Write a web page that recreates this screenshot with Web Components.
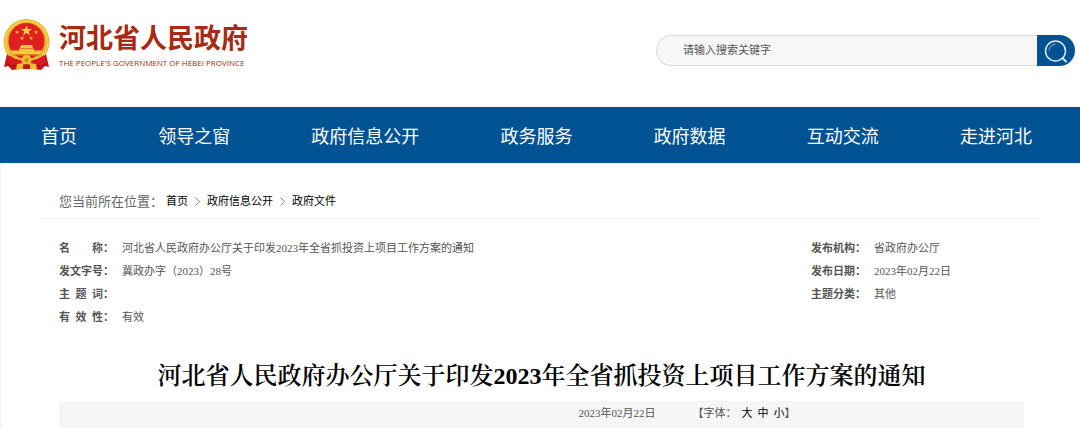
<!DOCTYPE html>
<html lang="zh-CN">
<head>
<meta charset="utf-8">
<title>河北省人民政府</title>
<style>
    body{
        margin: 0;
        background-color: #fff;
        color: #555;
        font-family: "Liberation Sans", "Noto Sans CJK SC", sans-serif;
        font-size: 11px;
    }
</style>
</head>
<body>
    <gov-header>
        <gov-logo></gov-logo>
        <gov-search></gov-search>
    </gov-header>

    <gov-nav>
        <nav-link>首页</nav-link>
        <nav-link>领导之窗</nav-link>
        <nav-link>政府信息公开</nav-link>
        <nav-link>政务服务</nav-link>
        <nav-link>政府数据</nav-link>
        <nav-link>互动交流</nav-link>
        <nav-link>走进河北</nav-link>
    </gov-nav>

    <gov-page>
        <bread-crumb slot="crumb">
            <crumb-item>首页</crumb-item>
            <crumb-item>政府信息公开</crumb-item>
            <crumb-item>政府文件</crumb-item>
        </bread-crumb>
        <doc-meta>
            <meta-row slot="left" label="名 称">河北省人民政府办公厅关于印发2023年全省抓投资上项目工作方案的通知</meta-row>
            <meta-row slot="left" label="发文字号">冀政办字（2023）28号</meta-row>
            <meta-row slot="left" label="主 题 词"></meta-row>
            <meta-row slot="left" label="有 效 性">有效</meta-row>
            <meta-row slot="right" label="发布机构">省政府办公厅</meta-row>
            <meta-row slot="right" label="发布日期">2023年02月22日</meta-row>
            <meta-row slot="right" label="主题分类">其他</meta-row>
        </doc-meta>
        <doc-title>河北省人民政府办公厅关于印发2023年全省抓投资上项目工作方案的通知</doc-title>
        <doc-tools>2023年02月22日</doc-tools>
    </gov-page>

<script>
// small helper, every element clones its own template
function makeTemplate(html){
    const t = document.createElement("template");
    t.innerHTML = html;
    return t;
}

class BaseElement extends HTMLElement{
    constructor(){
        super();
        this.attachShadow({mode:"open"});
        this.shadowRoot.appendChild(this.constructor.template.content.cloneNode(true));
    }
}

// top strip: logo on the left, search on the right
class GovHeader extends BaseElement{
    static template = makeTemplate(`
<style>
    :host{
        display: flex;
        justify-content: space-between;
        align-items: flex-start;
        gap: 24px;
        box-sizing: border-box;
        min-height: 107px;
        padding: 18px 5px 0 3px;
    }
</style>
<slot></slot>
`);
}
customElements.define("gov-header", GovHeader);

class GovLogo extends BaseElement{
    static template = makeTemplate(`
<style>
    :host{
        display: block;
    }
    a{
        display: flex;
        align-items: center;
        gap: 9px;
        color: #a62b12;
        text-decoration: none;
    }
    svg{
        width: 47px;
        height: 53px;
        flex: none;
    }
    .names{
        display: flex;
        flex-direction: column;
        padding-top: 5px;
        white-space: nowrap;
    }
    .cn{
        font-size: 27px;
        line-height: 32px;
        font-weight: 700;
    }
    .en{
        font-family: "Open Sans", sans-serif;
        font-size: 8px;
        line-height: 16px;
        font-weight: 500;
    }
</style>
<a href="#">
    <svg viewBox="0 0 47 53" aria-hidden="true">
        <path d="M4 36h39l3 13-4-1-4 4-7-1-5-3h-5l-5 3-7 1-4-4-4 1z" fill="#c5161d"/>
        <path d="M8 39l-3 9M39 39l3 9M12 44l-2 6M35 44l2 6" stroke="#8f0f12" stroke-width="1"/>
        <circle cx="23.500" cy="24" r="23" fill="#e9b42c"/>
        <circle cx="23.500" cy="24" r="21" fill="none" stroke="#f3cc4c" stroke-width="2"/>
        <circle cx="23.500" cy="23" r="18" fill="#e01f21"/>
        <path d="M23.500 7l1.400 4h4.200l-3.400 2.500 1.300 4.100-3.500-2.500-3.500 2.500 1.300-4.100-3.400-2.500h4.200z" fill="#f9cf45"/>
        <g fill="#f5bd38">
            <path d="M14 12l.6 1.500h1.600l-1.300 1 .5 1.600-1.400-1-1.400 1 .5-1.600-1.300-1h1.600z"/>
            <path d="M33 12l.6 1.500h1.600l-1.300 1 .5 1.600-1.400-1-1.400 1 .5-1.600-1.300-1h1.600z"/>
            <path d="M19 18l.6 1.500h1.600l-1.300 1 .5 1.600-1.400-1-1.400 1 .5-1.600-1.300-1h1.600z"/>
            <path d="M28 18l.6 1.500h1.600l-1.300 1 .5 1.600-1.400-1-1.400 1 .5-1.600-1.300-1h1.600z"/>
        </g>
        <path d="M18 27h11l1 3h-13zM16 30.500h15v2h8l-2 4h-27l-2-4h8z" fill="#f6c841"/>
        <path d="M9 37h29" stroke="#d98f1c" stroke-width="1"/>
        <path d="M6 37q9 7 17.500 4q8.500 3 17.500-4l2 8q-9 4-15 1h-9q-6 3-15-1z" fill="#d8191f"/>
        <path d="M11 39l9 3M36 39l-9 3" stroke="#efbb34" stroke-width="2"/>
        <circle cx="23.500" cy="42" r="5" fill="#efbd35"/>
        <circle cx="23.500" cy="42" r="2" fill="#cf8a1a"/>
        <path d="M14 46l6-1v6l-7 1zM27 45l6 1 1 6-7-1z" fill="#efbb34"/>
        <path d="M20 47l3.500-1 3.500 1v4h-7z" fill="#c5161d"/>
    </svg>
    <span class="names">
        <span class="cn">河北省人民政府</span>
        <span class="en">THE PEOPLE'S GOVERNMENT OF HEBEI PROVINCE</span>
    </span>
</a>
`);
}
customElements.define("gov-logo", GovLogo);

class GovSearch extends BaseElement{
    static template = makeTemplate(`
<style>
    :host{
        display: block;
        flex: 0 1 419px;
        margin-top: 17px;
    }
    form{
        display: flex;
        height: 31px;
        margin: 0;
    }
    input{
        flex: 1;
        min-width: 0;
        box-sizing: border-box;
        border: 1px solid #dcdcdc;
        border-right: none;
        border-radius: 16px 0 0 16px;
        background-color: #f7f7f7;
        padding: 0 26px 2px;
        color: #555;
        font: inherit;
        outline: none;
    }
    input::placeholder{
        color: #555;
        opacity: 1;
    }
    button{
        display: flex;
        justify-content: center;
        align-items: center;
        width: 38px;
        padding: 0;
        border: none;
        border-radius: 0 16px 16px 0;
        background-color: #015293;
        cursor: pointer;
    }
</style>
<form>
    <input type="text" aria-label="搜索" placeholder="请输入搜索关键字">
    <button type="button" aria-label="搜索">
        <svg width="24" height="24" viewBox="0 0 24 24" fill="none" stroke="#dbe8f3" stroke-linecap="round">
            <circle cx="11.500" cy="12" r="10" stroke-width="1.500"/>
            <path d="M5 11q1-5 6-6" stroke="#8db3d3"/>
            <path d="M18.500 19l3.500 3.500" stroke-width="2"/>
        </svg>
    </button>
</form>
`);
}
customElements.define("gov-search", GovSearch);

class GovNav extends BaseElement{
    static template = makeTemplate(`
<style>
    :host{
        display: block;
        background-color: #015293;
    }
    nav{
        display: flex;
        justify-content: space-between;
        padding: 4px 48px 0 41px;
    }
</style>
<nav><slot></slot></nav>
`);
}
customElements.define("gov-nav", GovNav);

class NavLink extends BaseElement{
    static template = makeTemplate(`
<style>
    :host{
        display: block;
    }
    a{
        display: block;
        color: #fff;
        font-size: 18px;
        line-height: 52px;
        white-space: nowrap;
        text-decoration: none;
    }
</style>
<a href="#"><slot></slot></a>
`);
}
customElements.define("nav-link", NavLink);

// page body, crumb bar is wider than the article
class GovPage extends BaseElement{
    static template = makeTemplate(`
<style>
    :host{
        display: block;
        border-left: 1px solid #f0f0f0;
        padding: 0 40px;
    }
    .crumb{
        padding: 22px 18px 0;
        border-bottom: 1px solid #f3f3f3;
    }
    article{
        padding: 18px 16px 0 18px;
    }
</style>
<div class="crumb"><slot name="crumb"></slot></div>
<article><slot></slot></article>
`);
}
customElements.define("gov-page", GovPage);

class BreadCrumb extends BaseElement{
    static template = makeTemplate(`
<style>
    :host{
        display: block;
    }
    nav{
        display: flex;
        align-items: center;
        line-height: 33px;
    }
    .where{
        font-size: 13px;
        margin-right: 3px;
        color: #666;
    }
</style>
<nav aria-label="位置">
    <span class="where">您当前所在位置：</span>
    <slot></slot>
</nav>
`);
}
customElements.define("bread-crumb", BreadCrumb);

class CrumbItem extends BaseElement{
    static template = makeTemplate(`
<style>
    :host{
        display: flex;
        align-items: center;
    }
    a{
        color: #000;
        text-decoration: none;
    }
    svg{
        margin: 0 7px;
    }
    :host(:last-child) svg{
        display: none;
    }
</style>
<a href="#"><slot></slot></a>
<svg width="5" height="9" viewBox="0 0 5 9" fill="none" stroke="#888" aria-hidden="true"><path d="M.5.5l4 4-4 4"/></svg>
`);
}
customElements.define("crumb-item", CrumbItem);

class DocMeta extends BaseElement{
    static template = makeTemplate(`
<style>
    :host{
        display: grid;
        grid-template-columns: 1fr 213px;
        font-family: "Liberation Serif", "Noto Sans CJK SC", serif;
    }
</style>
<div><slot name="left"></slot></div>
<div><slot name="right"></slot></div>
`);
}
customElements.define("doc-meta", DocMeta);

class MetaRow extends BaseElement{
    static template = makeTemplate(`
<style>
    :host{
        display: flex;
        line-height: 23px;
    }
    .label{
        display: flex;
        width: 63px;
        flex: none;
        font-weight: 700;
    }
    /* every label is spread over four characters */
    .name{
        width: 4em;
        text-align-last: justify;
    }
</style>
<span class="label"><span class="name"></span>：</span>
<span><slot></slot></span>
`);
    connectedCallback(){
        this.shadowRoot.querySelector(".name").textContent = this.getAttribute("label");
    }
}
customElements.define("meta-row", MetaRow);

class DocTitle extends BaseElement{
    static template = makeTemplate(`
<style>
    :host{
        display: block;
    }
    h1{
        margin: 30px 0 8px;
        color: #000;
        font-family: "Liberation Serif", "Noto Serif CJK SC", "Noto Sans CJK SC", serif;
        font-size: 24px;
        line-height: 34px;
        font-weight: 600;
        text-align: center;
    }
</style>
<h1><slot></slot></h1>
`);
}
customElements.define("doc-title", DocTitle);

class DocTools extends BaseElement{
    static template = makeTemplate(`
<style>
    :host{
        display: grid;
        grid-template-columns: 7fr 6fr;
        padding-bottom: 2px;
        background-color: #f6f6f6;
        font-family: "Liberation Serif", "Noto Sans CJK SC", serif;
        line-height: 25px;
    }
    .items{
        grid-column: 2;
        display: flex;
        gap: 37px;
        white-space: nowrap;
    }
    .size{
        display: flex;
    }
    .sizes{
        display: flex;
        gap: 5px;
        margin-left: 5px;
    }
    button{
        padding: 0;
        border: none;
        background: none;
        color: #000;
        font: inherit;
        line-height: inherit;
        cursor: pointer;
    }
</style>
<div class="items">
    <span><slot></slot></span>
    <span class="size">【字体：
        <span class="sizes"><button>大</button><button>中</button><button>小</button></span>】</span>
</div>
`);
}
customElements.define("doc-tools", DocTools);
</script>
</body>
</html>
